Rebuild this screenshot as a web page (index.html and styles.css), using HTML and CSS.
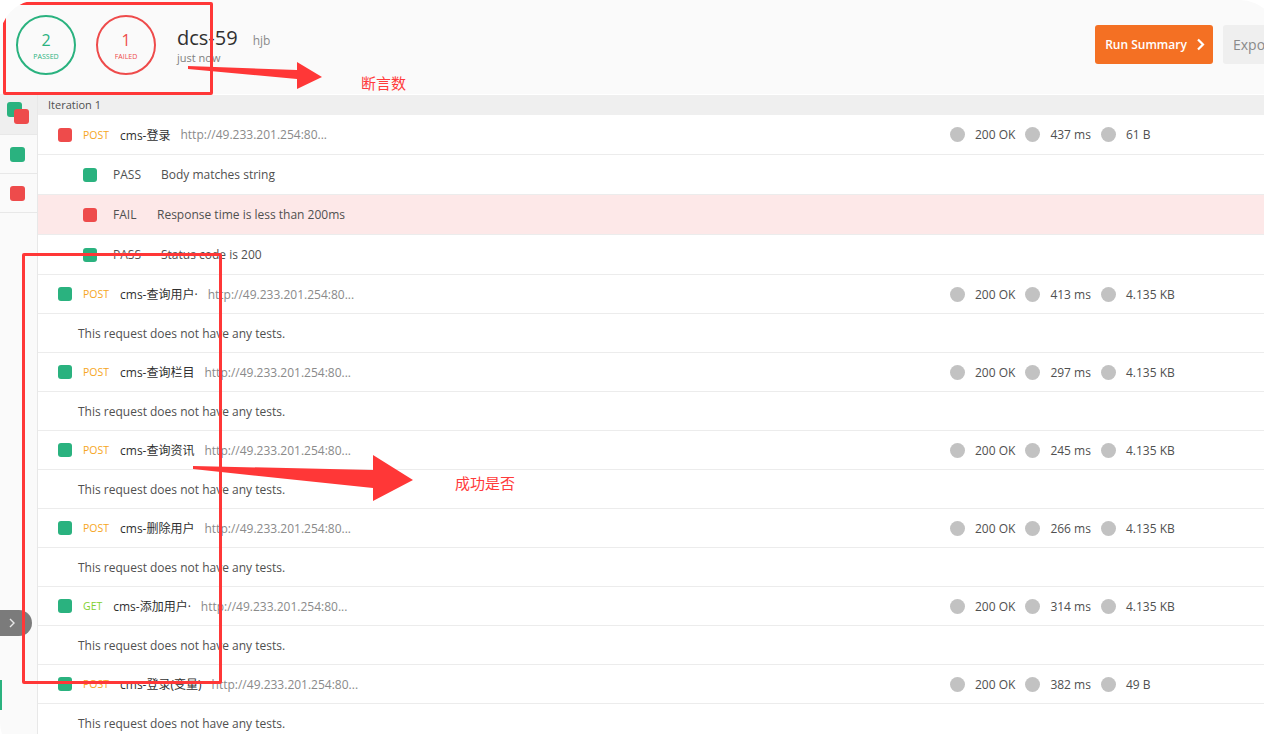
FILE: index.html
```html
<!DOCTYPE html>
<html lang="zh">
<head>
<meta charset="utf-8">
<title>Run Results</title>
<link rel="stylesheet" href="styles.css">
</head>
<body>
<div class="app">
  <header class="head">
    <div class="circle pass"><span class="num">2</span><span class="lbl">PASSED</span></div>
    <div class="circle fail"><span class="num">1</span><span class="lbl">FAILED</span></div>
    <div class="title">
      <div class="name-line"><span class="run-name">dcs-59</span><span class="env">hjb</span></div>
      <div class="when">just now</div>
    </div>
    <div class="actions">
      <button class="btn-run">Run Summary <svg class="chev" width="9" height="13" viewBox="0 0 9 13"><path d="M2 1.5 L7 6.5 L2 11.5" fill="none" stroke="#fff" stroke-width="2.2"/></svg></button>
      <button class="btn-export">Export Results</button>
    </div>
  </header>
  <div class="content">
    <aside class="side">
      <div class="side-item active"><span class="sq green stack1"></span><span class="sq red stack2"></span></div>
      <div class="side-item"><span class="sq green"></span></div>
      <div class="side-item"><span class="sq red"></span></div>
      <div class="collapse"><svg width="8" height="12" viewBox="0 0 8 12"><path d="M2 2 L6 6 L2 10" fill="none" stroke="#e8e8e8" stroke-width="1.4"/></svg></div>
      <div class="edge-mark"></div>
    </aside>
    <main class="main">
      <div class="iter">Iteration 1</div>

      <div class="row req first">
        <div class="req-left"><span class="sq red"></span><span class="method post">POST</span><span class="rname">cms-登录</span><span class="url">http://49.233.201.254:80...</span></div>
        <div class="stats"><span class="dot"></span><span class="sv">200 OK</span><span class="dot"></span><span class="sv">437 ms</span><span class="dot"></span><span class="sv">61 B</span></div>
      </div>
      <div class="row test"><span class="sq green"></span><span class="res">PASS</span><span class="tname">Body matches string</span></div>
      <div class="row test failed"><span class="sq red"></span><span class="res">FAIL</span><span class="tname">Response time is less than 200ms</span></div>
      <div class="row test"><span class="sq green"></span><span class="res">PASS</span><span class="tname">Status code is 200</span></div>

      <div class="row req">
        <div class="req-left"><span class="sq green"></span><span class="method post">POST</span><span class="rname">cms-查询用户·</span><span class="url">http://49.233.201.254:80...</span></div>
        <div class="stats"><span class="dot"></span><span class="sv">200 OK</span><span class="dot"></span><span class="sv">413 ms</span><span class="dot"></span><span class="sv">4.135 KB</span></div>
      </div>
      <div class="row none">This request does not have any tests.</div>

      <div class="row req">
        <div class="req-left"><span class="sq green"></span><span class="method post">POST</span><span class="rname">cms-查询栏目</span><span class="url">http://49.233.201.254:80...</span></div>
        <div class="stats"><span class="dot"></span><span class="sv">200 OK</span><span class="dot"></span><span class="sv">297 ms</span><span class="dot"></span><span class="sv">4.135 KB</span></div>
      </div>
      <div class="row none">This request does not have any tests.</div>

      <div class="row req">
        <div class="req-left"><span class="sq green"></span><span class="method post">POST</span><span class="rname">cms-查询资讯</span><span class="url">http://49.233.201.254:80...</span></div>
        <div class="stats"><span class="dot"></span><span class="sv">200 OK</span><span class="dot"></span><span class="sv">245 ms</span><span class="dot"></span><span class="sv">4.135 KB</span></div>
      </div>
      <div class="row none">This request does not have any tests.</div>

      <div class="row req">
        <div class="req-left"><span class="sq green"></span><span class="method post">POST</span><span class="rname">cms-删除用户</span><span class="url">http://49.233.201.254:80...</span></div>
        <div class="stats"><span class="dot"></span><span class="sv">200 OK</span><span class="dot"></span><span class="sv">266 ms</span><span class="dot"></span><span class="sv">4.135 KB</span></div>
      </div>
      <div class="row none">This request does not have any tests.</div>

      <div class="row req">
        <div class="req-left"><span class="sq green"></span><span class="method get">GET</span><span class="rname">cms-添加用户·</span><span class="url">http://49.233.201.254:80...</span></div>
        <div class="stats"><span class="dot"></span><span class="sv">200 OK</span><span class="dot"></span><span class="sv">314 ms</span><span class="dot"></span><span class="sv">4.135 KB</span></div>
      </div>
      <div class="row none">This request does not have any tests.</div>

      <div class="row req">
        <div class="req-left"><span class="sq green"></span><span class="method post">POST</span><span class="rname">cms-登录(变量)</span><span class="url">http://49.233.201.254:80...</span></div>
        <div class="stats"><span class="dot"></span><span class="sv">200 OK</span><span class="dot"></span><span class="sv">382 ms</span><span class="dot"></span><span class="sv">49 B</span></div>
      </div>
      <div class="row none">This request does not have any tests.</div>
    </main>
  </div>

  <div class="mark box1"></div>
  <div class="mark box2"></div>
  <svg class="arrows" width="1264" height="734" viewBox="0 0 1264 734">
    <polygon points="188,66 297,70 297,62 322,77 297,89 297,79 188,69" fill="#ff3737"/>
    <polygon points="193,466 373,470 373,455 413,480 373,501 373,488 193,469" fill="#ff3737"/>
  </svg>
  <div class="note note1">断言数</div>
  <div class="note note2">成功是否</div>
</div>
</body>
</html>
```
FILE: styles.css
```css
html, body {
  margin: 0;
  padding: 0;
  background: #ffffff;
  overflow: hidden;
}
body {
  width: 1264px;
  height: 734px;
  font-family: "Open Sans", "Noto Sans", "Noto Sans CJK SC", sans-serif;
  color: #505050;
}
.app {
  position: relative;
  width: 1278px;
  height: 760px;
  border-radius: 38px;
  overflow: hidden;
  background: #ffffff;
}
.head {
  height: 94px;
  background: #fafafa;
  display: flex;
  align-items: center;
  padding: 0 0 0 15px;
  box-sizing: border-box;
}
.circle {
  width: 60px;
  height: 60px;
  box-sizing: border-box;
  border-radius: 50%;
  border: 2.5px solid;
  display: flex;
  flex-direction: column;
  align-items: center;
  justify-content: center;
  margin-top: -4px;
}
.circle.pass { border-color: #2ab27f; color: #2ab27f; margin-left: 1px; }
.circle.fail { border-color: #ee4b4b; color: #ee4b4b; margin-left: 20px; }
.circle .num { font-size: 16px; line-height: 18px; margin-top: 2px; }
.circle .lbl { font-size: 7px; line-height: 10px; margin-top: 3px; letter-spacing: 0; }
.title { margin-left: 21px; margin-top: -4px; }
.name-line { display: flex; align-items: baseline; }
.run-name { font-size: 20px; color: #303030; line-height: 24px; }
.env { font-size: 12px; color: #8a8a8a; margin-left: 15px; }
.when { font-size: 11px; color: #808080; margin-top: 1px; line-height: 14px; }
.actions {
  margin-left: auto;
  display: flex;
  align-items: center;
  gap: 10px;
  margin-top: -6px;
  margin-right: -95px;
}
.btn-run {
  width: 118px;
  height: 39px;
  background: #f47023;
  border: 0;
  border-radius: 3px;
  color: #fff;
  font-family: "Open Sans", sans-serif;
  font-size: 12px;
  font-weight: 600;
  display: flex;
  align-items: center;
  justify-content: center;
  gap: 9px;
  padding: 0 0 0 2px;
  flex: none;
}
.chev { display: block; }
.btn-export {
  width: 150px;
  height: 39px;
  background: #efefef;
  border: 0;
  border-radius: 3px;
  color: #8a8a8a;
  font-family: "Open Sans", sans-serif;
  font-size: 14px;
  text-align: left;
  padding: 0 0 0 10px;
  white-space: nowrap;
  flex: none;
}
.content {
  display: flex;
  height: 666px;
}
.side {
  position: relative;
  width: 37px;
  flex: none;
  background: #fafafa;
  border-right: 1px solid #e8e8e8;
}
.side-item {
  position: relative;
  height: 40px;
  border-bottom: 1px solid #e8e8e8;
  box-sizing: border-box;
  display: flex;
  align-items: center;
  justify-content: center;
}
.side-item:nth-child(2), .side-item:nth-child(3) { height: 39px; }
.side-item.active { background: #efefef; height: 41px; }
.sq {
  display: inline-block;
  width: 14px;
  height: 14px;
  border-radius: 3px;
  flex: none;
}
.sq.green { background: #2ab27f; }
.sq.red { background: #ee4b4b; }
.side-item .sq { width: 15px; height: 15px; margin-left: -2px; }
.side-item .stack1 { position: absolute; left: 7px; top: 8px; margin: 0; }
.side-item .stack2 { position: absolute; left: 14px; top: 15px; margin: 0; }
.collapse {
  position: absolute;
  left: 0;
  top: 516px;
  width: 32px;
  height: 26px;
  background: #7b7b7b;
  border-radius: 0 13px 13px 0;
  display: flex;
  align-items: center;
  padding-left: 8px;
  box-sizing: border-box;
}
.edge-mark {
  position: absolute;
  left: 0;
  top: 586px;
  width: 2px;
  height: 30px;
  background: #2ab27f;
}
.main {
  flex: 1;
  background: #fff;
}
.iter {
  height: 20px;
  background: #efefef;
  font-size: 11px;
  line-height: 20px;
  padding-left: 10px;
  color: #505050;
  margin-top: 1px;
}
.row {
  box-sizing: border-box;
  height: 39px;
  border-bottom: 1px solid #ececec;
  display: flex;
  align-items: center;
  font-size: 12px;
}
.row.first { height: 40px; }
.row.test { height: 40px; padding-left: 45px; }
.row.test.failed { background: #fde8e8; }
.req-left {
  width: 892px;
  padding-left: 20px;
  display: flex;
  align-items: center;
  flex: none;
}
.method { font-size: 10.5px; margin-left: 11px; }
.method.post { color: #f6a623; }
.method.get { color: #7fcf2e; }
.rname {
  margin-left: 11px;
  color: #303030;
  font-family: "Open Sans", "Noto Sans CJK SC", sans-serif;
}
.url { margin-left: 10px; color: #8a8a8a; }
.res { margin-left: 16px; width: 44px; }
.failed .res { width: 40px; }
.tname { margin-left: 4px; }
.row.none { padding-left: 40px; }
.stats { display: flex; align-items: center; }
.dot {
  width: 15px;
  height: 15px;
  border-radius: 50%;
  background: #c2c2c2;
  margin-right: 10px;
}
.sv { margin-right: 10px; }

.mark {
  position: absolute;
  border: 3px solid #ff3737;
  border-radius: 2px;
  box-sizing: border-box;
}
.box1 { left: 3px; top: 2px; width: 210px; height: 93px; }
.box2 { left: 22px; top: 253px; width: 200px; height: 431px; }
.arrows { position: absolute; left: 0; top: 0; }
.note {
  position: absolute;
  color: #ff3b3b;
  font-family: "Noto Sans CJK SC", sans-serif;
  font-size: 15px;
  line-height: 18px;
}
.note1 { left: 361px; top: 74px; }
.note2 { left: 455px; top: 474px; }
```
